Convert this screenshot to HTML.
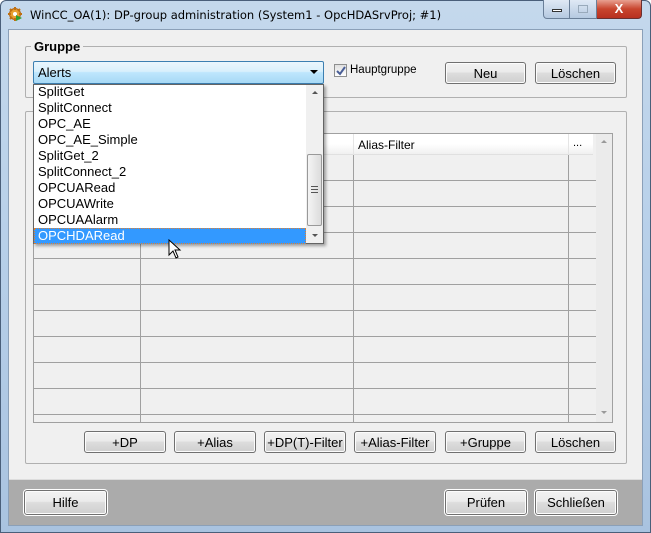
<!DOCTYPE html>
<html><head><meta charset="utf-8"><style>
*{box-sizing:border-box;margin:0;padding:0}
body{width:651px;height:533px;overflow:hidden;position:relative;font-family:"Liberation Sans",sans-serif;font-size:12px;color:#000;background:#fff}
.abs{position:absolute}
.frame{left:0;top:0;width:651px;height:533px;background:linear-gradient(#c4d8ec,#b9d1ea 40%,#a9c3e0);border:1px solid #4a5f7a;border-radius:6px 6px 0 0}
.client{left:8px;top:29px;width:635px;height:497px;background:#f0f0f0;border:1px solid #8ba0b8}
.title{left:30px;top:8px;font-family:"DejaVu Sans",sans-serif;font-size:11.5px;color:#000}
.grp{border:1px solid #b0b0b0;border-radius:2px}
.btn{position:absolute;height:22px;border:1px solid #707070;border-radius:3px;background:linear-gradient(#f2f2f2 0,#ebebeb 45%,#dddddd 50%,#cfcfcf 100%);text-align:center;line-height:22px;font-size:13px;box-shadow:inset 0 0 0 1px #fcfcfc}
.list div{height:16px;line-height:16px;padding-left:4px;font-size:13px}
.hl{position:absolute;height:1px;background:#a0a0a0}
.vl{position:absolute;width:1px;background:#a0a0a0}
</style></head><body>
<div class="abs frame"></div>
<svg class="abs" style="left:7px;top:6px" width="16" height="16" viewBox="0 0 16 16"><circle cx="8" cy="8" r="5.5" fill="#e8a030" stroke="#b06010"/><circle cx="8" cy="8" r="2" fill="#fff"/><path d="M8 1v3M8 12v3M1 8h3M12 8h3M3 3l2 2M11 11l2 2M13 3l-2 2M3 13l2-2" stroke="#c07010" stroke-width="2"/><path d="M9 9l6 3-6 3z" fill="#30a030"/></svg>
<div class="abs title">WinCC_OA(1): DP-group administration (System1 - OpcHDASrvProj; #1)</div>
<div class="abs" style="left:543px;top:0;width:27px;height:19px;border:1px solid #6a7f98;border-top:0;border-radius:0 0 0 4px;background:linear-gradient(#dfe9f5,#b5c9e0)"><div class="abs" style="left:8px;top:9px;width:10px;height:3px;background:#fff;border:1px solid #333"></div></div>
<div class="abs" style="left:570px;top:0;width:27px;height:19px;border:1px solid #6a7f98;border-top:0;border-left:0;background:linear-gradient(#dfe9f5,#b5c9e0)"><div class="abs" style="left:8px;top:5px;width:10px;height:8px;border:1px solid #9ab"></div></div>
<div class="abs" style="left:597px;top:0;width:45px;height:19px;border:1px solid #6a3030;border-top:0;border-left:0;border-radius:0 0 4px 0;background:linear-gradient(#e8a090,#c8452e 50%,#b83020);color:#fff;font-weight:bold;text-align:center;font-size:13px;line-height:17px">X</div>
<div class="abs client"></div>
<div class="abs grp" style="left:25px;top:46px;width:602px;height:52px"></div>
<div class="abs" style="left:31px;top:39px;padding:0 3px;background:#f0f0f0;font-weight:bold;font-size:13px">Gruppe</div>
<div class="abs" style="left:33px;top:61px;width:291px;height:23px;border:1px solid #3c7fb1;border-radius:2px;background:linear-gradient(#eaf6fd,#d9f0fc 45%,#bee6fd 50%,#a7d9f5)"><span class="abs" style="left:4px;top:3px;font-size:13px">Alerts</span><span class="abs" style="right:5px;top:8px;width:0;height:0;border-left:4px solid transparent;border-right:4px solid transparent;border-top:4px solid #000"></span></div>
<div class="abs" style="left:334px;top:64px;width:13px;height:13px;border:1px solid #8e8f8f;background:linear-gradient(#e0e0e0,#fff)"><svg class="abs" style="left:1px;top:1px" width="10" height="10"><path d="M1 5l3 3 5-7" stroke="#4a5f97" stroke-width="2" fill="none"/></svg></div>
<div class="abs" style="left:350px;top:64px;font-size:11.5px">Hauptgruppe</div>
<div class="btn" style="left:445px;top:62px;width:81px">Neu</div>
<div class="btn" style="left:535px;top:62px;width:81px">Löschen</div>
<div class="abs grp" style="left:25px;top:111px;width:602px;height:353px"></div>
<div class="abs" style="left:33px;top:133px;width:580px;height:290px;border:1px solid #a0a0a0;background:#f0f0f0"></div>
<div class="abs" style="left:34px;top:134px;width:559px;height:21px;background:linear-gradient(#fff,#fff 50%,#f0f0f0);border-bottom:1px solid #e0e0e0"></div>
<div class="abs" style="left:358px;top:138px;font-size:12px">Alias-Filter</div>
<div class="abs" style="left:573px;top:137px;font-size:11px">...</div>
<div class="vl" style="left:353px;top:134px;height:21px;background:#e5e5e5"></div>
<div class="vl" style="left:568px;top:134px;height:21px;background:#e5e5e5"></div>
<div class="vl" style="left:140px;top:155px;height:267px"></div>
<div class="vl" style="left:353px;top:155px;height:267px"></div>
<div class="vl" style="left:568px;top:155px;height:267px"></div>
<div class="hl" style="left:34px;top:180px;width:562px"></div>
<div class="hl" style="left:34px;top:206px;width:562px"></div>
<div class="hl" style="left:34px;top:232px;width:562px"></div>
<div class="hl" style="left:34px;top:258px;width:562px"></div>
<div class="hl" style="left:34px;top:284px;width:562px"></div>
<div class="hl" style="left:34px;top:310px;width:562px"></div>
<div class="hl" style="left:34px;top:336px;width:562px"></div>
<div class="hl" style="left:34px;top:362px;width:562px"></div>
<div class="hl" style="left:34px;top:388px;width:562px"></div>
<div class="hl" style="left:34px;top:414px;width:562px"></div>
<div class="abs" style="left:596px;top:134px;width:16px;height:288px;background:#ebebeb"></div>
<div class="abs" style="left:601px;top:140px;border-left:3px solid transparent;border-right:3px solid transparent;border-bottom:3px solid #999"></div>
<div class="abs" style="left:601px;top:411px;border-left:3px solid transparent;border-right:3px solid transparent;border-top:3px solid #999"></div>
<div class="btn" style="left:84px;top:431px;width:82px">+DP</div>
<div class="btn" style="left:174px;top:431px;width:82px">+Alias</div>
<div class="btn" style="left:264px;top:431px;width:82px">+DP(T)-Filter</div>
<div class="btn" style="left:354px;top:431px;width:82px">+Alias-Filter</div>
<div class="btn" style="left:445px;top:431px;width:81px">+Gruppe</div>
<div class="btn" style="left:535px;top:431px;width:81px">Löschen</div>
<div class="abs" style="left:9px;top:479px;width:633px;height:1px;background:#ddd"></div>
<div class="abs" style="left:9px;top:480px;width:633px;height:45px;background:#ababab"></div>
<div class="btn" style="left:24px;top:490px;width:83px;height:25px;line-height:24px;outline:1px solid #fff">Hilfe</div>
<div class="btn" style="left:445px;top:490px;width:82px;height:25px;line-height:24px;outline:1px solid #fff">Prüfen</div>
<div class="btn" style="left:535px;top:490px;width:82px;height:25px;line-height:24px;outline:1px solid #fff">Schließen</div>
<div class="abs" style="left:33px;top:84px;width:291px;height:160px;background:#fff;border:1px solid #646464;box-shadow:2px 2px 3px rgba(0,0,0,.35)">
<div class="list abs" style="left:0;top:-1px;width:272px">
<div>SplitGet</div><div>SplitConnect</div><div>OPC_AE</div><div>OPC_AE_Simple</div><div>SplitGet_2</div><div>SplitConnect_2</div><div>OPCUARead</div><div>OPCUAWrite</div><div>OPCUAAlarm</div><div style="background:#3399ff;color:#fff;outline:1px dotted #e08030;outline-offset:-1px">OPCHDARead</div>
</div>
<div class="abs" style="left:272px;top:0;width:17px;height:158px;background:#f0f0f0"></div>
<div class="abs" style="left:278px;top:6px;border-left:3px solid transparent;border-right:3px solid transparent;border-bottom:3px solid #555"></div>
<div class="abs" style="left:278px;top:149px;border-left:3px solid transparent;border-right:3px solid transparent;border-top:3px solid #555"></div>
<div class="abs" style="left:273px;top:69px;width:15px;height:72px;border:1px solid #999;border-radius:2px;background:linear-gradient(90deg,#f4f4f4,#dcdcdc)"></div>
<div class="abs" style="left:277px;top:101px;width:7px;height:7px;border-top:1px solid #555;border-bottom:1px solid #555"><div style="margin-top:2px;height:1px;background:#555"></div></div>
</div>
<svg class="abs" style="left:168px;top:239px" width="14" height="21" viewBox="0 0 14 21"><path d="M1 1v15l4-4 3 7 2-1-3-7h5z" fill="#fff" stroke="#000"/></svg>
</body></html>
